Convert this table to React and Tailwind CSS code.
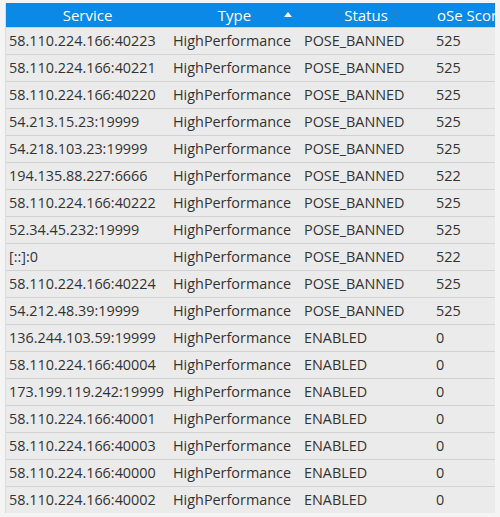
import React from "react";

const rows = [
  ["58.110.224.166:40223", "POSE_BANNED", "525"],
  ["58.110.224.166:40221", "POSE_BANNED", "525"],
  ["58.110.224.166:40220", "POSE_BANNED", "525"],
  ["54.213.15.23:19999", "POSE_BANNED", "525"],
  ["54.218.103.23:19999", "POSE_BANNED", "525"],
  ["194.135.88.227:6666", "POSE_BANNED", "522"],
  ["58.110.224.166:40222", "POSE_BANNED", "525"],
  ["52.34.45.232:19999", "POSE_BANNED", "525"],
  ["[::]:0", "POSE_BANNED", "522"],
  ["58.110.224.166:40224", "POSE_BANNED", "525"],
  ["54.212.48.39:19999", "POSE_BANNED", "525"],
  ["136.244.103.59:19999", "ENABLED", "0"],
  ["58.110.224.166:40004", "ENABLED", "0"],
  ["173.199.119.242:19999", "ENABLED", "0"],
  ["58.110.224.166:40001", "ENABLED", "0"],
  ["58.110.224.166:40003", "ENABLED", "0"],
  ["58.110.224.166:40000", "ENABLED", "0"],
  ["58.110.224.166:40002", "ENABLED", "0"],
];

const App = () => {
  return (
    <div
      className="w-[500px] h-[517px] overflow-hidden bg-[#f4f4f4] pt-[3px] pl-[5px]"
      style={{ fontFamily: "'Open Sans', 'Noto Sans', sans-serif" }}
    >
      <div className="w-[490px] border-l border-[#dcdcdc]">
        <div className="grid grid-cols-[163px_131px_132px_64px] h-[24px] bg-[#0a8ae6] text-white text-[15px] leading-[24px]">
          <div className="text-center">Service</div>
          <div className="relative text-center">
            Type
            <span className="absolute right-[8px] top-[9px] w-0 h-0 border-l-[4px] border-r-[4px] border-b-[5px] border-l-transparent border-r-transparent border-b-white" />
          </div>
          <div className="text-center">Status</div>
          <div className="pl-[5px] whitespace-nowrap overflow-hidden">oSe Scor</div>
        </div>
        {rows.map((r, i) => (
          <div
            key={i}
            className="grid grid-cols-[163px_131px_132px_64px] h-[27px] bg-[#ebebeb] border-t border-[#d2d2d2] text-[14.4px] leading-[26px] text-[#333333] whitespace-nowrap"
          >
            <div className="pl-[3px]">{r[0]}</div>
            <div className="pl-[4px]">HighPerformance</div>
            <div className="pl-[4px]">{r[1]}</div>
            <div className="pl-[4px]">{r[2]}</div>
          </div>
        ))}
      </div>
    </div>
  );
};

export default App;
